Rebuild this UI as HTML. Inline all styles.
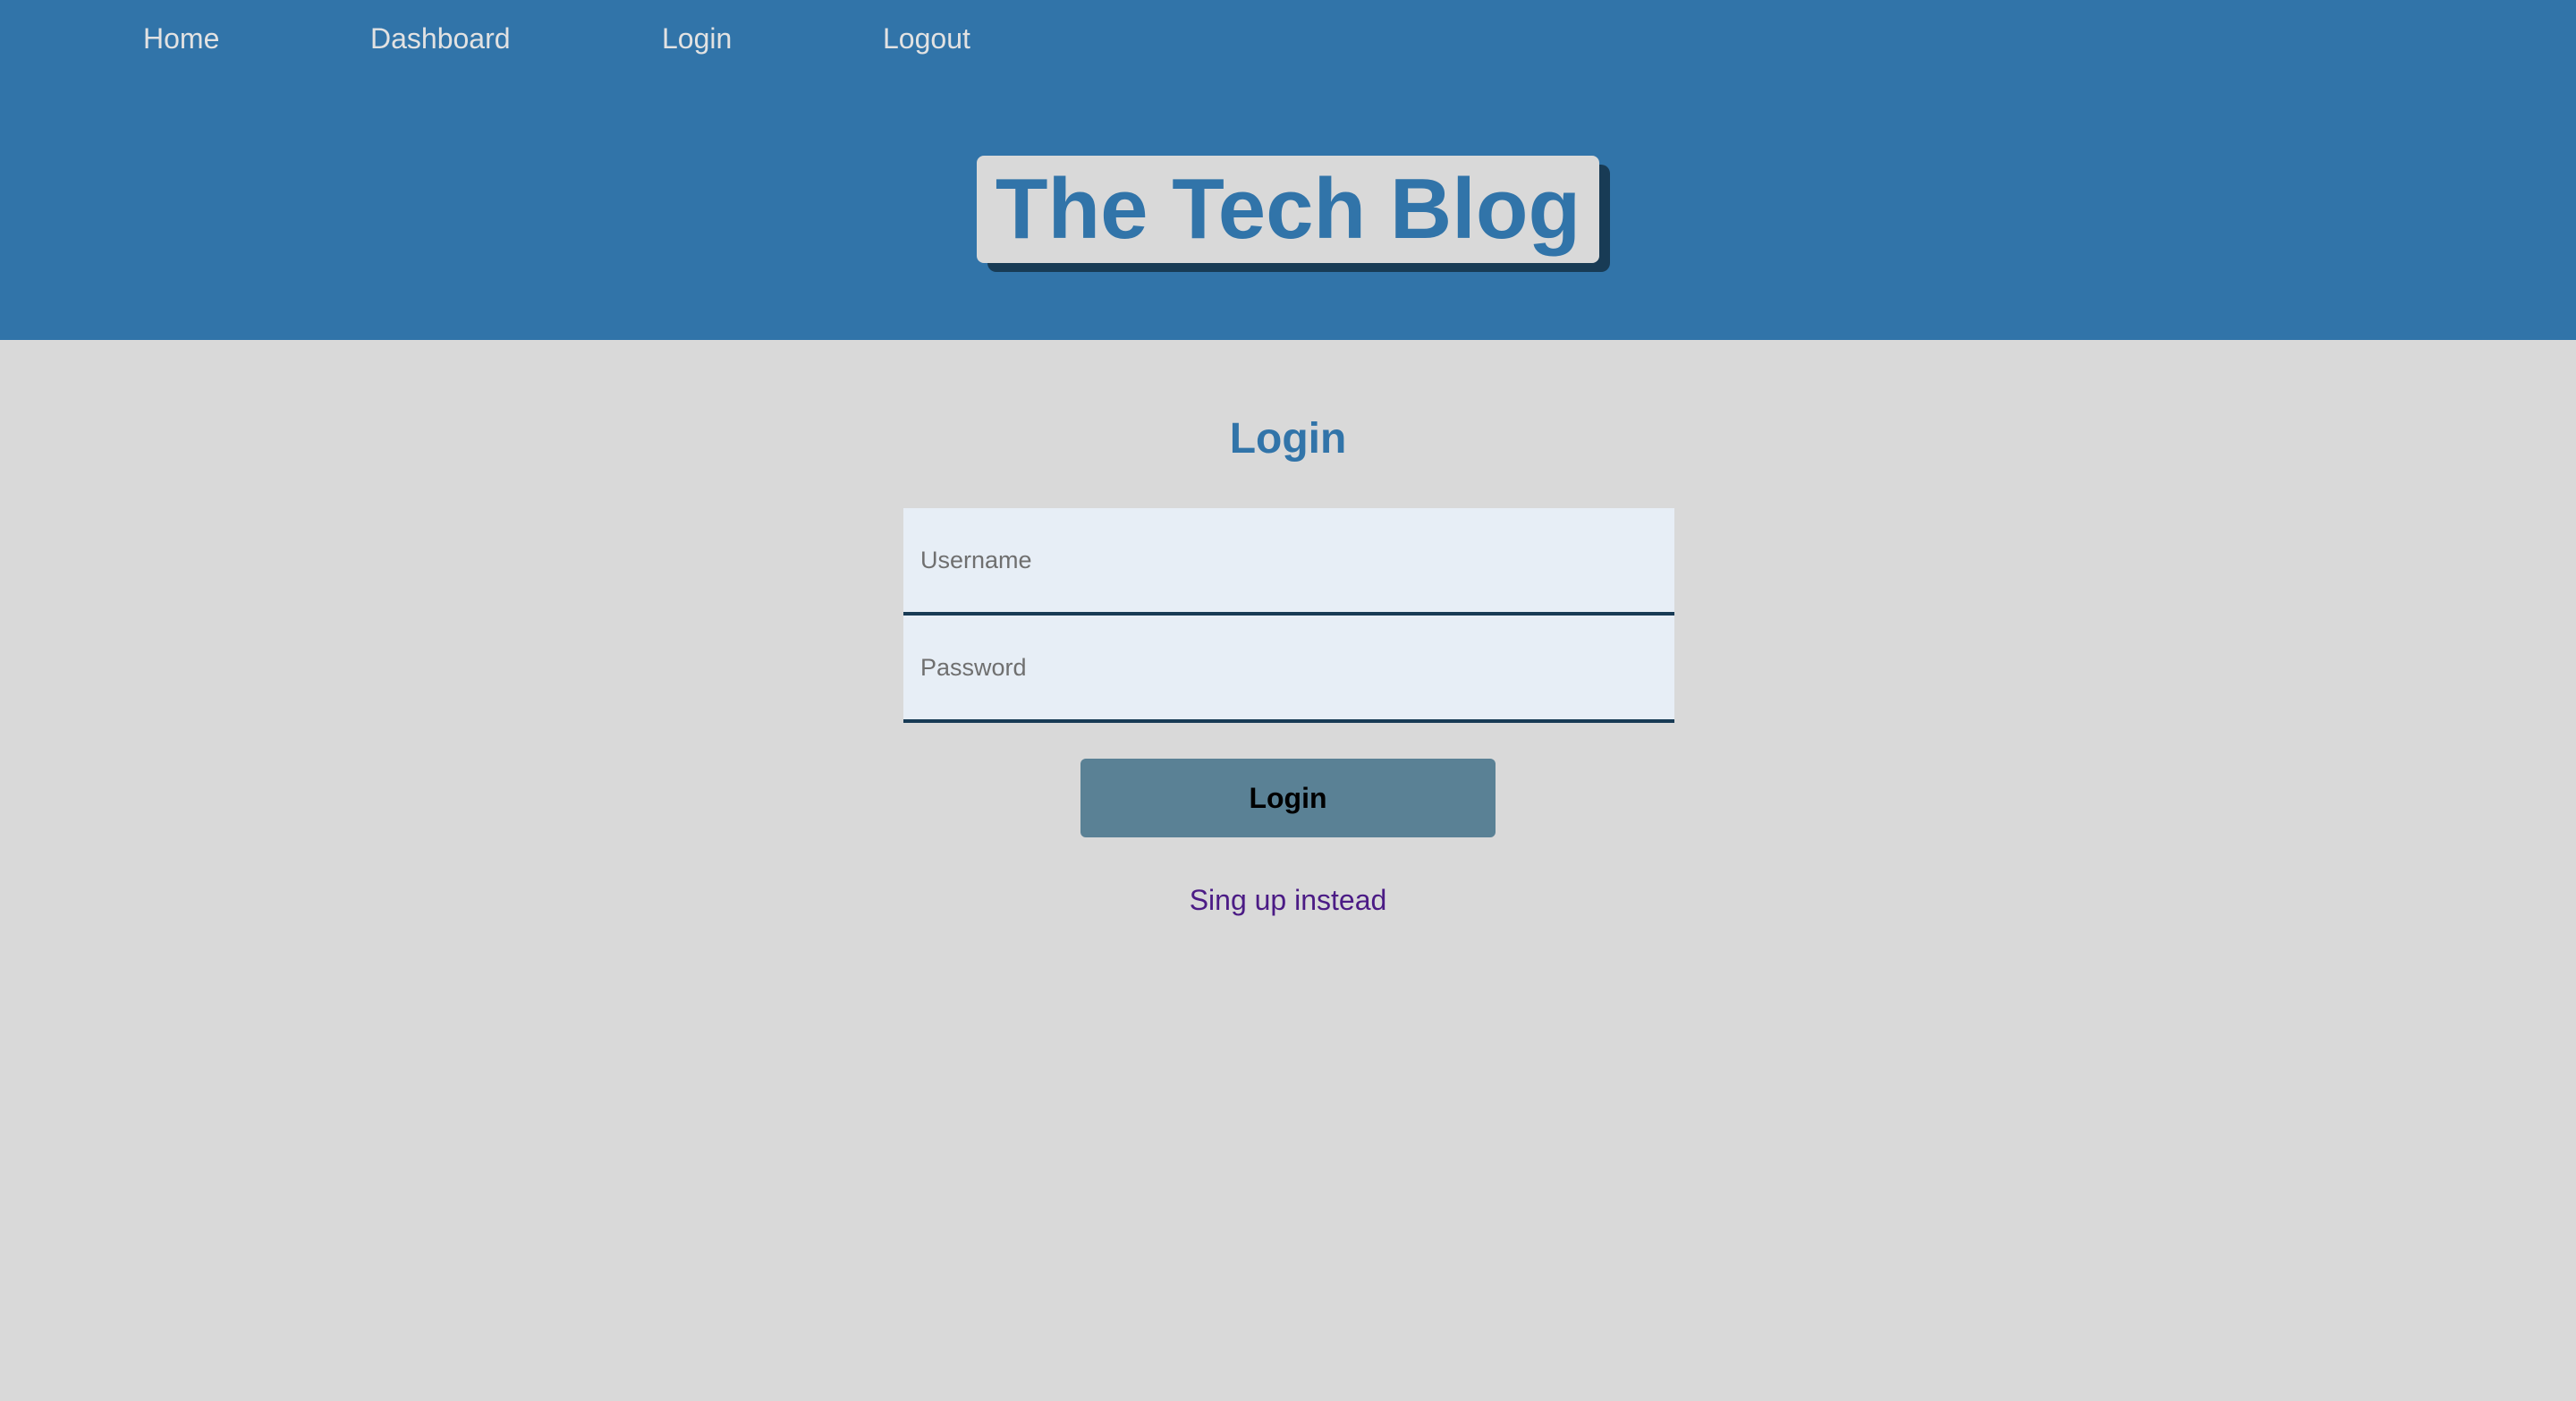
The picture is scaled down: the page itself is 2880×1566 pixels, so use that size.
<!DOCTYPE html>
<html><head><meta charset="utf-8"><style>
*{box-sizing:border-box;margin:0;padding:0}
html,body{width:2880px;height:1566px;overflow:hidden;background:#d9d9d9;font-family:"Liberation Sans",Arial,sans-serif}
header{position:absolute;left:0;top:0;width:2880px;height:380px;background:#3174a9}
.nav a{position:absolute;top:23px;color:#e2e2e2;font-size:32px;text-decoration:none;line-height:40px}
.shadow{position:absolute;left:1104px;top:184px;width:696px;height:120px;background:#183b55;border-radius:10px}
.title{position:absolute;left:1092px;top:174px;width:696px;height:120px;background:#d9d9d9;border-radius:8px;color:#3174a9;font-weight:bold;font-size:96px;line-height:120px;text-align:center;letter-spacing:0px}
h2{position:absolute;left:0;width:2880px;top:461px;text-align:center;color:#3174a9;font-size:48px;line-height:60px}
.inp{position:absolute;left:1010px;width:862px;height:120px;background:#e7eef6;border-bottom:4px solid #183b55;color:#6f6f6f;font-size:27px;padding-left:19px;line-height:116px}
.btn{position:absolute;left:1208px;top:848px;width:464px;height:88px;background:#5a8195;border-radius:6px;text-align:center;font-weight:bold;font-size:32px;line-height:88px;color:#000}
.link{position:absolute;left:0;width:2880px;top:986px;text-align:center;color:#4b1b85;font-size:32px;line-height:40px}
</style></head><body>
<header>
<div class="nav"><a style="left:160px">Home</a><a style="left:414px">Dashboard</a><a style="left:740px">Login</a><a style="left:987px">Logout</a></div>
<div class="shadow"></div>
<div class="title">The Tech Blog</div>
</header>
<h2>Login</h2>
<div class="inp" style="top:568px">Username</div>
<div class="inp" style="top:688px">Password</div>
<div class="btn">Login</div>
<div class="link">Sing up instead</div>
</body></html>
